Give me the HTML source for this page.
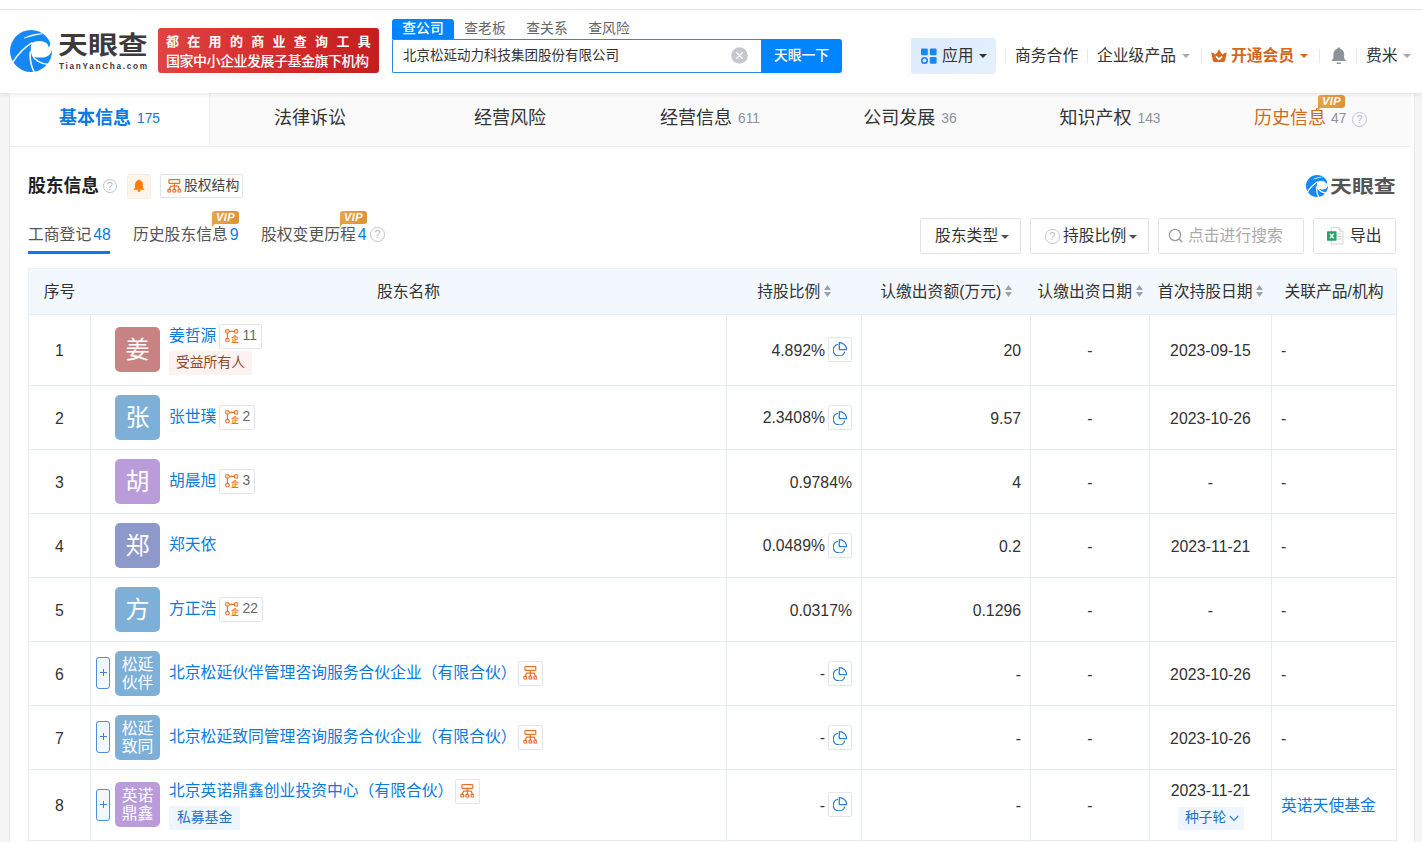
<!DOCTYPE html>
<html lang="zh-CN">
<head>
<meta charset="utf-8">
<title>天眼查 - 股东信息</title>
<style>
*{box-sizing:border-box;margin:0;padding:0}
html,body{width:1422px;height:842px;overflow:hidden}
body{position:relative;background:#f5f5f5;color:#333;font-family:"Liberation Sans","Noto Sans CJK SC",sans-serif;font-size:15.8px;line-height:1}
.abs{position:absolute}
a{color:#0a7be0;text-decoration:none}
svg{display:block}
/* ---------- header ---------- */
#top{position:absolute;left:0;top:0;width:1422px;height:93px;background:#fff;box-shadow:0 1px 5px rgba(0,0,0,.10);z-index:5}
#topline{position:absolute;left:0;top:9px;width:1422px;height:1px;background:#e3e3e3}
#logo{position:absolute;left:10px;top:30px;width:42px;height:42px}
#brand{position:absolute;left:58px;top:28px;font-size:25px;font-weight:700;color:#3c3a3b;white-space:nowrap;line-height:34px;transform:scaleX(1.195);transform-origin:0 50%}
#brandsub{position:absolute;left:59px;top:61px;font-size:8.2px;font-weight:700;color:#3c3a3b;letter-spacing:1.7px;white-space:nowrap;line-height:12px}
#banner{position:absolute;left:158px;top:28px;width:221px;height:45px;border-radius:3px;background:linear-gradient(90deg,#e14343 0%,#d42b2b 55%,#c41e1e 100%);color:#fff;white-space:nowrap}
#banner .l1{position:absolute;left:8px;top:7px;font-size:13px;font-weight:700;letter-spacing:8.3px;line-height:14px}
#banner .l2{position:absolute;left:8px;top:25px;font-size:14px;font-weight:500;letter-spacing:-.5px;line-height:16px}
#stabs{position:absolute;left:392px;top:19px;height:20px;white-space:nowrap;font-size:13.8px;color:#666}
#stabs span{display:inline-block;width:62px;height:20px;line-height:19px;text-align:center;vertical-align:top}
#stabs span.on{background:#0084ff;color:#fff;border-radius:3px 3px 0 0;font-weight:500}
#sinput{position:absolute;left:392px;top:39px;width:370px;height:34px;border:1px solid #2e86de;border-right:0;border-radius:2px 0 0 2px;background:#fff;font-size:13.5px;line-height:32px;padding-left:10px;color:#333;white-space:nowrap}
#sclear{position:absolute;left:731px;top:47px;width:17px;height:17px}
#sbtn{position:absolute;left:761px;top:39px;width:81px;height:34px;background:#0084ff;color:#fff;font-size:13.8px;font-weight:500;line-height:33px;text-align:center;border-radius:0 3px 3px 0}
#app{position:absolute;left:911px;top:38px;width:85px;height:36px;border-radius:3px;background:linear-gradient(135deg,#dcebfc 0%,#e0eefe 55%,#e7f0fb 100%)}
.hn{position:absolute;top:46px;font-size:15.8px;line-height:20px;white-space:nowrap;color:#333}
.sep{position:absolute;top:49px;width:1px;height:14px;background:#e8e8e8}
.caret{position:absolute;width:0;height:0;border-left:4px solid transparent;border-right:4px solid transparent;border-top:4.5px solid #aaa}
/* ---------- content ---------- */
#main{position:absolute;left:10px;top:93px;width:1404px;height:749px;background:#fff;box-shadow:-1px 0 0 #ebebeb,1px 0 0 #ebebeb}
#nav{position:absolute;left:0;top:0;width:1401px;height:54px;background:#fafafa;border-bottom:1px solid #eee}
#nav .t{position:absolute;top:0;height:53px;width:200px;text-align:center;font-size:18px;line-height:50px;white-space:nowrap;color:#333}
#nav .t.on{background:#fff;border-right:1px solid #eee;color:#0a7be0;font-weight:700;width:200px}
#nav .t small{font-size:13.8px;color:#8c919a;font-weight:400;margin-left:6px;position:relative;top:-1px}
#nav .t.on small{color:#0a7be0}
.vip{position:absolute;width:27px;height:13px;border-radius:3px;background:linear-gradient(100deg,#e9a54a,#dd9331);color:#fff;font-size:11px;font-weight:700;font-style:italic;line-height:13px;text-align:center;letter-spacing:.5px}
.vip:after{content:"";position:absolute;left:0;top:9px;width:0;height:0;border-top:7px solid #e2a045;border-right:6px solid transparent}
.q{position:absolute;width:14.500px;height:14.500px;border:1.200px solid #c0c4cc;border-radius:50%;color:#b4b9c1;font-size:11px;line-height:12.500px;text-align:center;font-weight:400}
/* ---------- section ---------- */
#sec-title{position:absolute;left:18px;top:81px;font-size:17.8px;font-weight:700;line-height:24px;color:#222;white-space:nowrap}
.bellbtn{position:absolute;left:117px;top:81px;width:24px;height:25px;border:1px solid #fcebdc;background:#fff4ea;border-radius:3px}
.sbtn2{position:absolute;left:150px;top:81px;width:83px;height:24px;border:1px solid #dfe3ea;border-radius:2px;background:#fff;font-size:13.8px;line-height:22px;color:#444;white-space:nowrap}
.subtab{position:absolute;top:131px;font-size:15.8px;line-height:22px;white-space:nowrap;color:#555}
.subtab b{font-weight:400;color:#0a7be0;margin-left:2px}
#subline{position:absolute;left:18px;top:158px;width:82px;height:3px;background:#0a7be0}
.fbtn{position:absolute;top:125px;height:36px;border:1px solid #e1e5eb;border-radius:2px;background:#fff;font-size:15.8px;line-height:33px;white-space:nowrap;color:#333}
/* ---------- table ---------- */
#tb{position:absolute;left:18px;top:175px;width:1368px;border-collapse:separate;border-spacing:0;table-layout:fixed;border-right:1px solid #e4ebf3;border-bottom:1px solid #e4ebf3;font-size:15.8px;color:#333}
#tb th,#tb td{border-left:1px solid #e4ebf3;border-top:1px solid #e4ebf3;padding:0;vertical-align:middle;font-weight:400;white-space:nowrap;position:relative}
#tb th{background:#f2f8fe;height:46px;color:#333;border-top-color:#eaf2fb;border-left-color:#f2f8fe}
#tb th:first-child{border-left-color:#eaf2fb}
#tb tr.r1 td{height:71px}
#tb tr.r2 td{height:64px}
#tb td.c{text-align:center;padding-top:2px}
#tb td.r{text-align:right;padding-right:9px;padding-top:2px}
#tb td.l{text-align:left;padding-left:9px;padding-top:2px}
.av{position:absolute;left:24px;width:45px;height:45px;border-radius:5px;color:#fff;text-align:center}
.av.s{font-size:24px;line-height:45px}
.av.d{font-size:15.8px;line-height:18px;padding-top:5px}
.nm{position:absolute;left:78px;font-size:15.8px;line-height:22px;white-space:nowrap}
.bd{position:absolute;height:25px;border:1px solid #e2e5eb;border-radius:2px;background:#fff;font-size:13.8px;line-height:23px;color:#555;white-space:nowrap}
.bd i{position:absolute;left:11px;top:10px;font-style:normal;font-size:8px;line-height:9px;font-weight:700;color:#e8722a}
.tag{position:absolute;left:78px;height:24px;border-radius:2px;font-size:13.8px;line-height:23px;padding:0 8px;white-space:nowrap}
.plus{position:absolute;left:5px;width:14px;height:32px;border:1px solid #4d8fdc;border-radius:3px;background:#f3f8ff}
.plus:before{content:"";position:absolute;left:3px;top:14px;width:7px;height:1px;background:#3a80e2}
.plus:after{content:"";position:absolute;left:6px;top:11px;width:1px;height:7px;background:#3a80e2}
.pie{display:inline-block;vertical-align:middle;width:24px;height:25px;border:1px solid #e2e5eb;border-radius:2px;margin-left:3px;position:relative;top:-1px;background:#fff}
#tb tr.r1 .pie{top:-2px}
.sort{display:inline-block;vertical-align:middle;width:7px;height:12px;margin-left:3.500px;position:relative;top:-1px}
</style>
</head>
<body>
<svg width="0" height="0" style="position:absolute"><defs>
<symbol id="lg" viewBox="0 0 42 42">
<circle cx="21" cy="21" r="21" fill="#1687f7"/>
<path d="M21.6 13.3C24 11.8 27 11 29.6 11.100C33 11.200 36.300 12.600 37.700 14.600C38.300 15.600 38.500 16.400 38.300 17.300L43 16.500L43 19L42.100 19.600C41.500 22 40.200 24.200 38.300 25.700C36.500 26.800 34.500 27.400 32.100 27.500C29 27.700 26.300 27.500 24.100 26.700C22.400 25.600 21.300 24 21 22.500C20.500 19 20.800 16 21.600 13.300z" fill="#fff"/>
<path d="M22.300 12.700C15 17 8 24 2.600 32.600" fill="none" stroke="#fff"/>
<path d="M20.300 21.500C19.500 29 21 36 24.600 43" fill="none" stroke="#fff"/>
<path d="M22 24.500C24.500 30 30 33.500 38.500 34.600" fill="none" stroke="#fff"/>
<path d="M14 8.200C19 5 25.500 3.700 32.300 3.700C26 4.700 19.500 6.800 14 8.200z" fill="#fff" stroke="#fff" stroke-width=".5" stroke-linejoin="round"/>
<path d="M43 12L40.400 12.900C40.300 14.600 39.700 16.200 38.500 17.500L43 17.500z" fill="#fff"/>
</symbol>
<symbol id="graph" viewBox="0 0 13.6 13.6"><g fill="none" stroke="#e8722a" stroke-width="1.15"><circle cx="2.400" cy="2.400" r="1.800"/><circle cx="11.200" cy="2.400" r="1.800"/><circle cx="2.400" cy="11.200" r="1.800"/><path d="M4.200 2.400h5.200M2.400 4.200v5.200"/></g></symbol>
<symbol id="struct" viewBox="0 0 14.7 13.8"><g fill="none" stroke="#e8722a" stroke-width="1.2"><rect x="1.900" y=".6" width="10.900" height="3.700" rx=".9"/><path d="M7.350 4.300V10.200M2.300 10.200L3.500 7.200H11.200L12.400 10.200"/><rect x=".9" y="10.300" width="2.800" height="2.900" rx=".8"/><rect x="5.950" y="10.300" width="2.800" height="2.900" rx=".8"/><rect x="11" y="10.300" width="2.800" height="2.900" rx=".8"/></g></symbol>
<symbol id="pie" viewBox="0 0 14.4 14.2"><g fill="none" stroke="#2b7fd9" stroke-width="1.3" stroke-linejoin="round"><path d="M5 2.300A5.900 5.900 0 1 0 11.800 9.600"/><path d="M6.300 .7A7.200 7.200 0 0 1 13.700 7.600H6.300z"/></g></symbol>
<symbol id="sort" viewBox="0 0 7 12"><path d="M3.500 0L7 5H0z" fill="#9da2ab"/><path d="M3.500 12L7 7H0z" fill="#9da2ab"/></symbol>
</defs></svg>
<div id="top">
  <div id="topline"></div>
  <svg id="logo" style="stroke-width:1.500"><use href="#lg"/></svg>
  <div id="brand">天眼查</div>
  <div id="brandsub">TianYanCha.com</div>
  <div id="banner"><div class="l1">都在用的商业查询工具</div><div class="l2">国家中小企业发展子基金旗下机构</div></div>
  <div id="stabs"><span class="on">查公司</span><span>查老板</span><span>查关系</span><span>查风险</span></div>
  <div id="sinput">北京松延动力科技集团股份有限公司</div>
  <svg id="sclear" viewBox="0 0 17 17"><circle cx="8.5" cy="8.5" r="8.3" fill="#c6c7cc"/><path d="M5.600 5.600l5.800 5.800M11.400 5.600l-5.800 5.800" stroke="#fff" stroke-width="1.300" stroke-linecap="round"/></svg>
  <div id="sbtn">天眼一下</div>
  <div id="app"></div>
  <svg class="abs" style="left:921px;top:48px" width="16" height="16" viewBox="0 0 16 16"><rect x="0" y="0.5" width="6.800" height="6.800" rx="1.300" fill="#1687f7"/><rect x="8.800" y="0.5" width="6.800" height="6.800" rx="1.300" fill="#1687f7"/><rect x="8.800" y="9" width="6.800" height="6.800" rx="1.300" fill="#1687f7"/><circle cx="3.500" cy="12.400" r="2.700" fill="none" stroke="#1687f7" stroke-width="1.600"/></svg>
  <div class="hn" style="left:942px">应用</div>
  <div class="caret" style="left:979px;top:54px;border-top-color:#333"></div>
  <div class="sep" style="left:1005px"></div>
  <div class="hn" style="left:1015px">商务合作</div>
  <div class="sep" style="left:1087px"></div>
  <div class="hn" style="left:1097px">企业级产品</div>
  <div class="caret" style="left:1182px;top:54px"></div>
  <div class="sep" style="left:1201px"></div>
  <svg class="abs" style="left:1211px;top:48.500px" width="16" height="13" viewBox="0 0 16 13"><path d="M.3 3.400Q2.700 3.600 4.500 5.400Q6.800 3 8 0Q9.200 3 11.500 5.400Q13.300 3.600 15.700 3.400L14.200 11.600Q14 13 12.600 13H3.400Q2 13 1.800 11.600z" fill="#d9691a"/><path d="M5 7.300L8 10.300L11 7.300" fill="none" stroke="#fff" stroke-width="1.700"/></svg>
  <div class="hn" style="left:1231px;color:#d2691e;font-weight:700">开通会员</div>
  <div class="caret" style="left:1300px;top:54px;border-top-color:#d9691a"></div>
  <div class="sep" style="left:1319px"></div>
  <svg class="abs" style="left:1329.500px;top:47px" width="17.500" height="18" viewBox="0 0 16 18" preserveAspectRatio="none"><path d="M8 0.600c.8 0 1.300.5 1.300 1.200 2.300.7 3.600 2.700 3.600 5.200v3.600c0 1 .6 1.900 1.600 2.600v.8H1.500v-.8c1-.7 1.600-1.600 1.600-2.600V7c0-2.500 1.300-4.500 3.600-5.200C6.700 1.100 7.200.6 8 .6z" fill="#8e9299"/><rect x="6" y="15.600" width="4" height="1.500" rx=".7" fill="#8e9299"/></svg>
  <div class="sep" style="left:1356px"></div>
  <div class="hn" style="left:1366px">费米</div>
  <div class="caret" style="left:1403px;top:54px"></div>
</div>
<div id="main">
  <div id="nav">
    <div class="t on" style="left:0">基本信息<small>175</small></div>
    <div class="t" style="left:200px">法律诉讼</div>
    <div class="t" style="left:400px">经营风险</div>
    <div class="t" style="left:600px">经营信息<small>611</small></div>
    <div class="t" style="left:800px">公司发展<small>36</small></div>
    <div class="t" style="left:1000px">知识产权<small>143</small></div>
    <div class="t" style="left:1200px;color:#d2691e;text-align:left;padding-left:44px">历史信息<small style="margin-left:5px">47</small></div>
    <span class="vip" style="left:1308px;top:2px">VIP</span>
    <span class="q" style="left:1342px;top:19px;width:15px;height:15px;line-height:13px">?</span>
  </div>
  <div id="sec-title">股东信息</div>
  <span class="q" style="left:92.500px;top:85.500px">?</span>
  <span class="bellbtn"><svg class="abs" style="left:5px;top:4px" width="12" height="14" viewBox="0 0 12 14"><path d="M6 .4c.6 0 1 .4 1 .9 1.800.5 2.900 2.100 2.900 4v2.800c0 .8.500 1.500 1.300 2v.7H.8v-.7c.8-.5 1.300-1.200 1.300-2V5.300c0-1.900 1.100-3.500 2.900-4C5 .8 5.400.4 6 .4z" fill="#ff7d00"/><path d="M4.400 10.800h3.200c-.1 1.400-.7 2.200-1.600 2.200s-1.500-.8-1.600-2.200z" fill="#ff7d00"/></svg></span>
  <span class="sbtn2"><span class="abs" style="left:6px;top:4px"><svg width="14.7" height="13.8"><use href="#struct"/></svg></span><span class="abs" style="left:23px;top:0">股权结构</span></span>
  <svg class="abs" style="left:1296px;top:82px;stroke-width:2.300" width="22" height="22"><use href="#lg"/></svg>
  <div class="abs" style="left:1320px;top:81px;font-size:18.4px;font-weight:700;color:#555;line-height:26px;white-space:nowrap;transform:scaleX(1.19);transform-origin:0 50%">天眼查</div>
  <div class="subtab" style="left:18px">工商登记<b>48</b></div>
  <div id="subline"></div>
  <div class="subtab" style="left:123px">历史股东信息<b>9</b></div>
  <span class="vip" style="left:202px;top:118px">VIP</span>
  <div class="subtab" style="left:251px">股权变更历程<b>4</b></div>
  <span class="vip" style="left:330px;top:118px">VIP</span>
  <span class="q" style="left:360px;top:134px">?</span>
  <div class="fbtn" style="left:910px;width:101px;padding-left:14px">股东类型<span class="caret" style="left:80px;top:16px;border-top-color:#555"></span></div>
  <div class="fbtn" style="left:1020px;width:119px;padding-left:32px"><span class="q" style="left:14px;top:10px">?</span>持股比例<span class="caret" style="left:98px;top:16px;border-top-color:#555"></span></div>
  <div class="fbtn" style="left:1148px;width:146px;padding-left:29px;color:#aaa"><svg class="abs" style="left:9px;top:9px" width="16" height="16" viewBox="0 0 16 16"><circle cx="7" cy="7" r="5.600" fill="none" stroke="#999" stroke-width="1.300"/><path d="M11 11l3.300 3.300" stroke="#999" stroke-width="1.300"/></svg>点击进行搜索</div>
  <div class="fbtn" style="left:1303px;width:83px;padding-left:36px"><svg class="abs" style="left:13px;top:8px" width="17" height="18" viewBox="0 0 16 17"><path d="M4 .5h7.500L15 4v12H4z" fill="#fff" stroke="#c9ccd1" stroke-width=".8"/><path d="M11.500.5V4H15" fill="none" stroke="#c9ccd1" stroke-width=".8"/><path d="M10 6.500h3.500M10 9h3.500M10 11.500h3.500" stroke="#c9ccd1" stroke-width=".9"/><rect x="0" y="4" width="9" height="9" rx=".8" fill="#21a366"/><path d="M2.600 6.200l3.800 4.600M6.400 6.200l-3.800 4.600" stroke="#fff" stroke-width="1.300"/></svg>导出</div>
  <table id="tb">
    <colgroup><col style="width:62px"><col style="width:636px"><col style="width:135px"><col style="width:169px"><col style="width:119px"><col style="width:122px"><col style="width:125px"></colgroup>
    <tr><th>序号</th><th>股东名称</th><th>持股比例<svg class="sort"><use href="#sort"/></svg></th><th>认缴出资额(万元)<svg class="sort"><use href="#sort"/></svg></th><th>认缴出资日期<svg class="sort"><use href="#sort"/></svg></th><th>首次持股日期<svg class="sort"><use href="#sort"/></svg></th><th>关联产品/机构</th></tr>
    <tr class="r1"><td class="c">1</td><td><span class="av s" style="top:12px;background:#c98383">姜</span><a class="nm" style="top:10px">姜哲源</a><span class="bd" style="left:128px;top:9px;width:43px"><svg class="abs" style="left:5.4px;top:4.2px" width="13.6" height="13.6"><use href="#graph"/></svg><i>企</i><span class="abs" style="left:22.500px;top:-1px;color:#666">11</span></span><span class="tag" style="top:36px;background:#fdf2ef;color:#8a4a2b;padding:0 7px">受益所有人</span></td><td class="r">4.892%<span class="pie"><svg class="abs" style="left:4px;top:4.500px" width="14.4" height="14.2"><use href="#pie"/></svg></span></td><td class="r">20</td><td class="c">-</td><td class="c">2023-09-15</td><td class="l">-</td></tr>
<tr class="r2"><td class="c">2</td><td><span class="av s" style="top:9px;background:#7db0d8">张</span><a class="nm" style="top:20px">张世璞</a><span class="bd" style="left:128px;top:19px;width:36px"><svg class="abs" style="left:5.4px;top:4.2px" width="13.6" height="13.6"><use href="#graph"/></svg><i>企</i><span class="abs" style="left:22.500px;top:-1px;color:#666">2</span></span></td><td class="r">2.3408%<span class="pie"><svg class="abs" style="left:4px;top:4.500px" width="14.4" height="14.2"><use href="#pie"/></svg></span></td><td class="r">9.57</td><td class="c">-</td><td class="c">2023-10-26</td><td class="l">-</td></tr>
<tr class="r2"><td class="c">3</td><td><span class="av s" style="top:9px;background:#ba9cda">胡</span><a class="nm" style="top:20px">胡晨旭</a><span class="bd" style="left:128px;top:19px;width:36px"><svg class="abs" style="left:5.4px;top:4.2px" width="13.6" height="13.6"><use href="#graph"/></svg><i>企</i><span class="abs" style="left:22.500px;top:-1px;color:#666">3</span></span></td><td class="r">0.9784%</td><td class="r">4</td><td class="c">-</td><td class="c">-</td><td class="l">-</td></tr>
<tr class="r2"><td class="c">4</td><td><span class="av s" style="top:9px;background:#8e99cb">郑</span><a class="nm" style="top:20px">郑天依</a></td><td class="r">0.0489%<span class="pie"><svg class="abs" style="left:4px;top:4.500px" width="14.4" height="14.2"><use href="#pie"/></svg></span></td><td class="r">0.2</td><td class="c">-</td><td class="c">2023-11-21</td><td class="l">-</td></tr>
<tr class="r2"><td class="c">5</td><td><span class="av s" style="top:9px;background:#7db0d8">方</span><a class="nm" style="top:20px">方正浩</a><span class="bd" style="left:128px;top:19px;width:44px"><svg class="abs" style="left:5.4px;top:4.2px" width="13.6" height="13.6"><use href="#graph"/></svg><i>企</i><span class="abs" style="left:22.500px;top:-1px;color:#666">22</span></span></td><td class="r">0.0317%</td><td class="r">0.1296</td><td class="c">-</td><td class="c">-</td><td class="l">-</td></tr>
<tr class="r2"><td class="c">6</td><td><span class="plus" style="top:15px"></span><span class="av d" style="top:9px;background:#7db0d8">松延<br>伙伴</span><a class="nm" style="top:20px">北京松延伙伴管理咨询服务合伙企业（有限合伙）</a><span class="bd" style="left:427px;top:19px;width:25px"><span class="abs" style="left:3.800px;top:4px"><svg width="14.7" height="13.8"><use href="#struct"/></svg></span></span></td><td class="r">-<span class="pie"><svg class="abs" style="left:4px;top:4.500px" width="14.4" height="14.2"><use href="#pie"/></svg></span></td><td class="r">-</td><td class="c">-</td><td class="c">2023-10-26</td><td class="l">-</td></tr>
<tr class="r2"><td class="c">7</td><td><span class="plus" style="top:15px"></span><span class="av d" style="top:9px;background:#7db0d8">松延<br>致同</span><a class="nm" style="top:20px">北京松延致同管理咨询服务合伙企业（有限合伙）</a><span class="bd" style="left:427px;top:19px;width:25px"><span class="abs" style="left:3.800px;top:4px"><svg width="14.7" height="13.8"><use href="#struct"/></svg></span></span></td><td class="r">-<span class="pie"><svg class="abs" style="left:4px;top:4.500px" width="14.4" height="14.2"><use href="#pie"/></svg></span></td><td class="r">-</td><td class="c">-</td><td class="c">2023-10-26</td><td class="l">-</td></tr>
<tr class="r1"><td class="c">8</td><td><span class="plus" style="top:19px"></span><span class="av d" style="top:12px;background:#ba9cda">英诺<br>鼎鑫</span><a class="nm" style="top:10px">北京英诺鼎鑫创业投资中心（有限合伙）</a><span class="bd" style="left:364px;top:9px;width:25px"><span class="abs" style="left:3.800px;top:4px"><svg width="14.7" height="13.8"><use href="#struct"/></svg></span></span><span class="tag" style="top:36px;background:#eef5fd;color:#1f6fc4">私募基金</span></td><td class="r">-<span class="pie"><svg class="abs" style="left:4px;top:4.500px" width="14.4" height="14.2"><use href="#pie"/></svg></span></td><td class="r">-</td><td class="c">-</td><td class="c"><span class="abs" style="left:0;width:100%;top:11px;line-height:20px">2023-11-21</span><span class="tag" style="left:28px;top:37px;width:66px;height:23px;padding:0 0 0 7px;text-align:left;background:#eef5fd;color:#1f6fc4;line-height:22px">种子轮<svg class="abs" style="left:51px;top:8px" width="10" height="7" viewBox="0 0 10 7"><path d="M.8 1l4.200 4.300L9.200 1" fill="none" stroke="#2b7fd9" stroke-width="1.200"/></svg></span></td><td class="l"><a>英诺天使基金</a></td></tr>
<tr class="r2"><td class="c"></td><td></td><td></td><td></td><td></td><td></td><td></td></tr>
  </table>
</div>
</body>
</html>
